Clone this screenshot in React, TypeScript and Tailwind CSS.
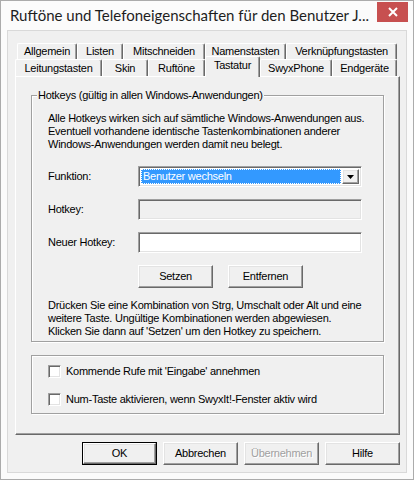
import React from "react";

// classic 3D edges
const raised =
  "border border-t-white border-l-white border-r-[#696969] border-b-[#696969] shadow-[inset_-1px_-1px_0_#a0a0a0,inset_1px_1px_0_#e3e3e3]";
const sunken =
  "border border-t-[#a0a0a0] border-l-[#a0a0a0] border-r-white border-b-white shadow-[inset_1px_1px_0_#696969,inset_-1px_-1px_0_#e3e3e3]";
const etched = "border border-[#a0a0a0] shadow-[1px_1px_0_white,inset_1px_1px_0_white]";

const topTabs = [
  { label: "Allgemein", w: "w-[60px]" },
  { label: "Listen", w: "w-[46px]" },
  { label: "Mitschneiden", w: "w-[82px]" },
  { label: "Namenstasten", w: "w-[81px]" },
  { label: "Verknüpfungstasten", w: "w-[111px]" },
];

const bottomTabs = [
  { label: "Leitungstasten", w: "w-[87px]" },
  { label: "Skin", w: "w-[46px]" },
  { label: "Ruftöne", w: "w-[57px]" },
  { label: "Tastatur", w: "w-[55px]", active: true },
  { label: "SwyxPhone", w: "w-[72px]" },
  { label: "Endgeräte", w: "w-[65px]" },
];

function Tab({ label, w, active }: { label: string; w: string; active?: boolean }) {
  if (active) {
    return (
      <div
        className={`${w} h-[21px] -mb-[1px] relative z-10 bg-[#f0f0f0] flex items-center justify-center pb-[4px] border-t border-l border-r border-t-white border-l-white border-r-[#696969] rounded-t-[2px] shadow-[inset_-1px_0_0_#a0a0a0]`}
      >
        {label}
      </div>
    );
  }
  return (
    <div
      className={`${w} h-full flex items-center justify-center border-t border-l border-r border-t-white border-l-white border-r-[#696969] rounded-t-[2px] shadow-[inset_-1px_0_0_#a0a0a0]`}
    >
      {label}
    </div>
  );
}

function Button({
  children,
  primary,
  disabled,
}: {
  children: React.ReactNode;
  primary?: boolean;
  disabled?: boolean;
}) {
  return (
    <div className={`w-[75px] h-[23px] ${primary ? "border border-black" : ""}`}>
      <div
        className={`h-full w-full flex items-center justify-center bg-[#f0f0f0] ${raised} ${
          disabled ? "text-[#a0a0a0] [text-shadow:1px_1px_0_white]" : "text-black"
        }`}
      >
        {children}
      </div>
    </div>
  );
}

function Checkbox({ label }: { label: string }) {
  return (
    <label className="flex items-center gap-[5px] h-[13px]">
      <span className={`w-[13px] h-[13px] bg-white ${sunken}`} />
      <span>{label}</span>
    </label>
  );
}

export default function App() {
  return (
    <div className="w-[414px] h-[480px] bg-[#fbfbfb] border border-[#ababab] flex flex-col px-[6px] pb-[6px] font-['Liberation_Sans',Arial,sans-serif] text-[11px] leading-[13px] tracking-[-0.25px] text-black whitespace-nowrap">
      {/* title bar */}
      <div className="h-[29px] flex items-start justify-between -mx-[6px]">
        <div className="pl-[9px] pt-[4px] text-[15px] leading-[20px] tracking-normal text-[#1e1e1e] font-['Lato',sans-serif]">
          Ruftöne und Telefoneigenschaften für den Benutzer J...
        </div>
        <div className="w-[31px] h-[20px] mr-[5px] mt-[1px] bg-[#c75050] flex items-center justify-center">
          <svg width="10" height="10" viewBox="0 0 10 10">
            <path d="M1 1 L9 9 M9 1 L1 9" stroke="white" strokeWidth="2" />
          </svg>
        </div>
      </div>

      {/* client area */}
      <div className="flex-1 border border-[#d9d9d9] bg-[#f0f0f0] flex flex-col pt-[12px] pl-[7px] pr-[6px] pb-[6px]">
        <div className="h-[16px] flex pl-[2px]">
          {topTabs.map((t) => (
            <Tab key={t.label} label={t.label} w={t.w} />
          ))}
        </div>
        <div className="h-[17px] flex items-end">
          {bottomTabs.map((t) => (
            <Tab key={t.label} label={t.label} w={t.w} active={t.active} />
          ))}
        </div>

        {/* tab page */}
        <div className="h-[359px] border border-t-white border-l-white border-r-[#696969] border-b-[#696969] shadow-[inset_-1px_-1px_0_#a0a0a0] px-[15px] pt-[12px]">
          <fieldset className={`${etched} px-0 h-[253px]`}>
            <legend className="ml-[5px] px-[1px] bg-[#f0f0f0]">
              Hotkeys (gültig in allen Windows-Anwendungen)
            </legend>
            <div className="px-[16px] pt-[10px] flex flex-col">
              <p>
                Alle Hotkeys wirken sich auf sämtliche Windows-Anwendungen aus.
                <br />
                Eventuell vorhandene identische Tastenkombinationen anderer
                <br />
                Windows-Anwendungen werden damit neu belegt.
              </p>

              <div className="mt-[15px] flex items-center h-[21px]">
                <span className="w-[90px]">Funktion:</span>
                <div className={`w-[224px] h-full bg-white flex items-stretch ${sunken} p-[2px]`}>
                  <div className="flex-1 bg-[#3399ff] text-white flex items-center pl-[2px] mr-[1px] outline outline-1 outline-dotted outline-white -outline-offset-1">
                    Benutzer wechseln
                  </div>
                  <div className={`w-[17px] bg-[#f0f0f0] flex items-center justify-center ${raised}`}>
                    <svg width="7" height="4" viewBox="0 0 7 4">
                      <path d="M0 0 H7 L3.5 4 Z" fill="black" />
                    </svg>
                  </div>
                </div>
              </div>

              <div className="mt-[12px] flex items-center h-[21px]">
                <span className="w-[90px]">Hotkey:</span>
                <div className={`w-[224px] h-full bg-[#f0f0f0] ${sunken}`} />
              </div>

              <div className="mt-[12px] flex items-center h-[21px]">
                <span className="w-[90px]">Neuer Hotkey:</span>
                <div className={`w-[224px] h-full bg-white ${sunken}`} />
              </div>

              <div className="mt-[12px] flex pl-[90px] gap-[15px]">
                <Button>Setzen</Button>
                <Button>Entfernen</Button>
              </div>

              <p className="mt-[11px]">
                Drücken Sie eine Kombination von Strg, Umschalt oder Alt und eine
                <br />
                weitere Taste. Ungültige Kombinationen werden abgewiesen.
                <br />
                Klicken Sie dann auf 'Setzen' um den Hotkey zu speichern.
              </p>
            </div>
          </fieldset>

          <div className={`${etched} mt-[13px] h-[59px] pl-[16px] pt-[9px] flex flex-col gap-[15px]`}>
            <Checkbox label="Kommende Rufe mit 'Eingabe' annehmen" />
            <Checkbox label="Num-Taste aktivieren, wenn SwyxIt!-Fenster aktiv wird" />
          </div>
        </div>

        {/* dialog buttons */}
        <div className="mt-[7px] flex justify-end gap-[6px]">
          <Button primary>OK</Button>
          <Button>Abbrechen</Button>
          <Button disabled>Übernehmen</Button>
          <Button>Hilfe</Button>
        </div>
      </div>
    </div>
  );
}
